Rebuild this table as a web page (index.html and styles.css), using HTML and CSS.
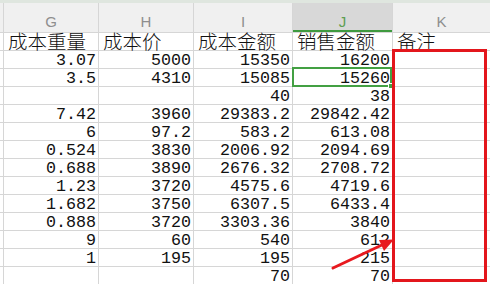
FILE: index.html
```html
<!DOCTYPE html>
<html lang="zh">
<head>
<meta charset="utf-8">
<title>Sheet</title>
<link rel="stylesheet" href="styles.css">
</head>
<body>
<div class="sheet">
  <div class="topline"></div>
  <div class="grid">
    <div class="hd"></div><div class="hd">G</div><div class="hd">H</div><div class="hd">I</div><div class="hd sel">J</div><div class="hd">K</div>

    <div class="c"></div><div class="c t">成本重量</div><div class="c t">成本价</div><div class="c t">成本金额</div><div class="c t">销售金额</div><div class="c t">备注</div>
    <div class="c"></div><div class="c n">3.07</div><div class="c n">5000</div><div class="c n">15350</div><div class="c n">16200</div><div class="c"></div>
    <div class="c"></div><div class="c n">3.5</div><div class="c n">4310</div><div class="c n">15085</div><div class="c n">15260</div><div class="c"></div>
    <div class="c"></div><div class="c n"></div><div class="c n"></div><div class="c n">40</div><div class="c n">38</div><div class="c"></div>
    <div class="c"></div><div class="c n">7.42</div><div class="c n">3960</div><div class="c n">29383.2</div><div class="c n">29842.42</div><div class="c"></div>
    <div class="c"></div><div class="c n">6</div><div class="c n">97.2</div><div class="c n">583.2</div><div class="c n">613.08</div><div class="c"></div>
    <div class="c"></div><div class="c n">0.524</div><div class="c n">3830</div><div class="c n">2006.92</div><div class="c n">2094.69</div><div class="c"></div>
    <div class="c"></div><div class="c n">0.688</div><div class="c n">3890</div><div class="c n">2676.32</div><div class="c n">2708.72</div><div class="c"></div>
    <div class="c"></div><div class="c n">1.23</div><div class="c n">3720</div><div class="c n">4575.6</div><div class="c n">4719.6</div><div class="c"></div>
    <div class="c"></div><div class="c n">1.682</div><div class="c n">3750</div><div class="c n">6307.5</div><div class="c n">6433.4</div><div class="c"></div>
    <div class="c"></div><div class="c n">0.888</div><div class="c n">3720</div><div class="c n">3303.36</div><div class="c n">3840</div><div class="c"></div>
    <div class="c"></div><div class="c n">9</div><div class="c n">60</div><div class="c n">540</div><div class="c n">612</div><div class="c"></div>
    <div class="c"></div><div class="c n">1</div><div class="c n">195</div><div class="c n">195</div><div class="c n">215</div><div class="c"></div>
    <div class="c"></div><div class="c n"></div><div class="c n"></div><div class="c n">70</div><div class="c n">70</div><div class="c"></div>
  </div>
  <div class="selbox"><span class="handle"></span></div>
  <div class="redbox"></div>
  <svg class="arrow" width="490" height="284" viewBox="0 0 490 284">
    <line x1="333" y1="268" x2="384" y2="244" stroke="#e8191f" stroke-width="3" stroke-linecap="round"/>
    <polygon points="394,239.5 384,251 379,240" fill="#e8191f"/>
  </svg>
</div>
</body>
</html>
```
FILE: styles.css
```css
html, body {
  margin: 0;
  padding: 0;
  background: #ffffff;
}
.sheet {
  position: relative;
  width: 490px;
  height: 284px;
  overflow: hidden;
  background: #ffffff;
}
.topline {
  height: 3px;
  background: #dfe6df;
}
.grid {
  display: grid;
  grid-template-columns: 3px 94px 94px 98px 99px 97px;
  grid-template-rows: 29px repeat(14, 17px);
  column-gap: 1px;
  row-gap: 1px;
  background: #d6d6d6;
}
.hd {
  box-sizing: border-box;
  height: 29px;
  padding-top: 8px;
  background: #f0f0f0;
  color: #8e8e8e;
  font-family: "Liberation Sans", Arial, sans-serif;
  font-size: 15px;
  line-height: 21px;
  text-align: center;
}
.hd.sel {
  background: #d8d8d8;
  color: #5e9e52;
  box-shadow: inset 0 -2px 0 #3f9a3f;
}
.c {
  background: #ffffff;
  color: #111111;
  overflow: visible;
  white-space: nowrap;
}
.n {
  font-family: "Liberation Mono", "Courier New", monospace;
  font-size: 16.7px;
  line-height: 16px;
  padding-top: 2px;
  padding-right: 2px;
  text-align: right;
}
.t {
  font-family: "Noto Sans CJK SC", sans-serif;
  font-weight: 300;
  font-size: 19.5px;
  line-height: 15px;
  padding-left: 4px;
  text-align: left;
}
.selbox {
  position: absolute;
  left: 292px;
  top: 67px;
  width: 96px;
  height: 16px;
  border: 2px solid #43a043;
}
.handle {
  position: absolute;
  right: -4px;
  bottom: -4px;
  width: 4px;
  height: 4px;
  background: #43a043;
  border: 1px solid #ffffff;
}
.redbox {
  position: absolute;
  left: 392px;
  top: 49px;
  width: 89px;
  height: 227px;
  border: 3px solid #e3161c;
}
.arrow {
  position: absolute;
  left: 0;
  top: 0;
}
```
